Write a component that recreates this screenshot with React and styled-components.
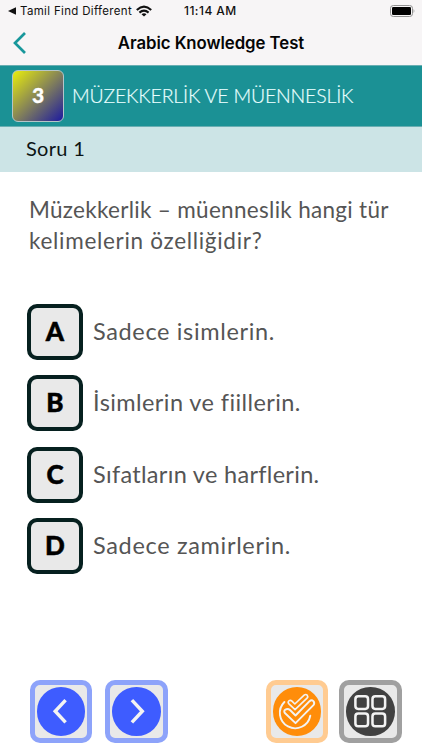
import React from "react";
import styled, { createGlobalStyle } from "styled-components";

const GlobalStyle = createGlobalStyle`
  * { box-sizing: border-box; }
  body { margin: 0; background: #fff; }
`;

const Screen = styled.div`
  display: flex;
  flex-direction: column;
  width: 422px;
  height: 750px;
  overflow: hidden;
  background: #fff;
  font-family: Lato, "Open Sans", sans-serif;
  white-space: nowrap;
`;

const StatusBar = styled.div`
  display: grid;
  grid-template-columns: 176px 1fr auto;
  align-items: center;
  height: 22px;
  padding: 0 7px 0 8px;
  background: #f7f5f6;
  font: 400 11.5px/22px Inter, sans-serif;
  color: #111;
`;

const BackToApp = styled.div`
  display: flex;
  align-items: center;
  letter-spacing: 0.33px;
  svg { flex: none; }
  svg:first-child { margin-right: 4px; }
  svg:last-child { margin-left: 4px; }
`;

const Clock = styled.div`
  font-weight: 500;
  font-size: 12px;
  letter-spacing: 0.45px;
`;

const NavBar = styled.header`
  display: grid;
  grid-template-columns: 48px 1fr 48px;
  align-items: center;
  height: 43px;
  background: #f7f5f6;
`;

const BackButton = styled.button`
  display: flex;
  padding: 0 0 1px 12px;
  border: 0;
  background: none;
`;

const NavTitle = styled.h1`
  margin: 0;
  text-align: center;
  font: 600 16.8px/43px Inter, sans-serif;
  letter-spacing: -0.06px;
  color: #050505;
`;

const Banner = styled.div`
  display: flex;
  align-items: center;
  gap: 8px;
  height: 62px;
  padding-left: 12px;
  border-top: 1px solid #69aeb2;
  border-bottom: 1px solid #69aeb2;
  background: #1b9195;
`;

const LevelBadge = styled.div`
  width: 52px;
  height: 52px;
  border: 1px solid #b5c5c8;
  border-radius: 6px;
  background: linear-gradient(135deg, #e9ee0c 0%, #858358 50%, #1c1aa0 100%);
  text-align: center;
  font-size: 21px;
  line-height: 48px;
  font-weight: 900;
  color: #fff;
  -webkit-text-stroke: 0.3px #fff;
`;

const Topic = styled.h2`
  margin: 0;
  font-size: 19.5px;
  font-weight: 300;
  line-height: 60px;
  letter-spacing: -0.18px;
  color: #e9ffff;
  -webkit-text-stroke: 0.2px #e9ffff;
`;

const QuestionNumber = styled.div`
  height: 45px;
  padding-left: 26px;
  background: #cce4e6;
  font-size: 20px;
  line-height: 43px;
  letter-spacing: 0.3px;
  color: #0c1415;
`;

const Question = styled.p`
  margin: 22px 0 0 29px;
  font-size: 22.5px;
  line-height: 31px;
  color: #555;
`;

const QuestionLine = styled.span`
  display: block;
  letter-spacing: ${(p) => p.$spacing}px;
`;

const Options = styled.div`
  display: grid;
  grid-auto-rows: 56px;
  row-gap: 15.3px;
  margin: 48px 0 0 27px;
`;

const Option = styled.div`
  display: flex;
  align-items: center;
  gap: 10px;
`;

const OptionText = styled.span`
  padding-bottom: 2px;
  font-size: 23.5px;
  letter-spacing: ${(p) => p.$spacing}px;
  color: #555;
`;

const OptionKey = styled.div`
  width: 56px;
  height: 56px;
  border: 4px solid #06201f;
  border-radius: 10px;
  background: #e9e9e9;
  text-align: center;
  font-size: 26px;
  line-height: 47px;
  font-weight: 900;
  color: #000;
  -webkit-text-stroke: 0.5px #000;
`;

const Footer = styled.footer`
  display: flex;
  justify-content: space-between;
  margin-top: auto;
  padding: 0 20.5px 7.5px 29.5px;
`;

const ButtonGroup = styled.div`
  display: flex;
  gap: ${(p) => p.$gap}px;
`;

const ToolButton = styled.button`
  display: flex;
  align-items: center;
  justify-content: center;
  width: 62.5px;
  height: 62.5px;
  padding: 0;
  border: 5px solid ${(p) => p.$frame};
  border-radius: 10px;
  background: #e9e9e9;
`;

const Disc = styled.span`
  display: flex;
  width: 48.5px;
  height: 48.5px;
  border-radius: 50%;
  background: ${(p) => p.$color};
`;

const options = [
  { key: "A", text: "Sadece isimlerin.", spacing: 0.65 },
  { key: "B", text: "İsimlerin ve fiillerin.", spacing: 0.42 },
  { key: "C", text: "Sıfatların ve harflerin.", spacing: 0.31 },
  { key: "D", text: "Sadece zamirlerin.", spacing: 0.67 },
];

const Icon = ({ children }) => (
  <svg width="48.5" height="48.5" viewBox="0 0 48 48" fill="none" stroke="#f3f3f3" strokeLinecap="round" strokeLinejoin="round">
    {children}
  </svg>
);

const bigTick =
  "M12 26 Q10.3 24 12 22.6 Q14.5 20.8 16.8 22.8 L22.3 28.2 L36.2 14 Q38.2 12.4 40 14 Q41.6 16 40 18 L22.3 35.8 Z";
const smallTick =
  "M15.5 16.5 Q14.4 14.8 15.8 13.6 Q17.4 12.7 18.8 14 L21.6 16.8 L30.8 8 Q32.4 6.8 33.8 8 Q35 9.5 33.7 11 L21.8 22.4 Z";

export default function App() {
  return (
    <Screen>
      <GlobalStyle />
      <StatusBar>
        <BackToApp>
          <svg width="8" height="8" viewBox="0 0 8 8"><path d="M0 4 L8 0.2 V7.8 Z" fill="#111" /></svg>
          Tamil Find Different
          <svg width="16" height="12" viewBox="0 0 16 12" fill="none" stroke="#111" strokeWidth="2.1">
            <path d="M0.8 4.9 Q8 -1.7 15.2 4.9" />
            <path d="M3.4 7.6 Q8 3.6 12.6 7.6" />
            <path d="M5.5 9.2 Q8 7.2 10.5 9.2 L8 11.6 Z" fill="#111" stroke="none" />
          </svg>
        </BackToApp>
        <Clock>11:14 AM</Clock>
        <svg width="25" height="12" viewBox="0 0 25 12">
          <rect x="0.5" y="0.5" width="22" height="11" rx="2.8" fill="none" stroke="#929292" />
          <rect x="2" y="2" width="19" height="8" rx="1.3" fill="#000" />
          <path d="M23.6 4 Q25.2 6 23.6 8 Z" fill="#929292" />
        </svg>
      </StatusBar>
      <NavBar>
        <BackButton aria-label="Geri">
          <svg width="15" height="22" viewBox="0 0 15 22" fill="none" stroke="#18979b" strokeWidth="2.7">
            <path d="M13 1 L3 11 L13 21" />
          </svg>
        </BackButton>
        <NavTitle>Arabic Knowledge Test</NavTitle>
      </NavBar>
      <Banner>
        <LevelBadge>3</LevelBadge>
        <Topic>MÜZEKKERLİK VE MÜENNESLİK</Topic>
      </Banner>
      <QuestionNumber>Soru 1</QuestionNumber>
      <Question>
        <QuestionLine $spacing={0.3}>Müzekkerlik – müenneslik hangi tür</QuestionLine>
        <QuestionLine $spacing={0.7}>kelimelerin özelliğidir?</QuestionLine>
      </Question>
      <Options>
        {options.map((o) => (
          <Option key={o.key}>
            <OptionKey>{o.key}</OptionKey>
            <OptionText $spacing={o.spacing}>{o.text}</OptionText>
          </Option>
        ))}
      </Options>
      <Footer>
        <ButtonGroup $gap={13}>
          <ToolButton $frame="#8da3fa" aria-label="Önceki">
            <Disc $color="#3e5cff">
              <Icon><path d="M28.3 13 L18 24 L28.3 35" strokeWidth="3.4" strokeLinecap="butt" strokeLinejoin="miter" /></Icon>
            </Disc>
          </ToolButton>
          <ToolButton $frame="#8da3fa" aria-label="Sonraki">
            <Disc $color="#3e5cff">
              <Icon><path d="M19.7 13 L30 24 L19.7 35" strokeWidth="3.4" strokeLinecap="butt" strokeLinejoin="miter" /></Icon>
            </Disc>
          </ToolButton>
        </ButtonGroup>
        <ButtonGroup $gap={11}>
          <ToolButton $frame="#ffcb91" aria-label="Kontrol">
            <Disc $color="#ff8d0a">
              <Icon>
                <path d="M11.3 14.8 A15.2 15.2 0 1 0 36.9 28.5" strokeWidth="1.9" />
                <path d={bigTick} strokeWidth="1.9" />
                <path d={smallTick} strokeWidth="1.6" />
              </Icon>
            </Disc>
          </ToolButton>
          <ToolButton $frame="#a0a0a0" aria-label="Sorular">
            <Disc $color="#414141">
              <Icon>
                <g strokeWidth="2.5">
                  <rect x="9.3" y="9.2" width="12.5" height="12.5" rx="2.8" />
                  <rect x="26.2" y="9.2" width="12.5" height="12.5" rx="2.8" />
                  <rect x="9.3" y="26.3" width="12.5" height="12.5" rx="2.8" />
                  <rect x="26.2" y="26.3" width="12.5" height="12.5" rx="2.8" />
                </g>
              </Icon>
            </Disc>
          </ToolButton>
        </ButtonGroup>
      </Footer>
    </Screen>
  );
}
